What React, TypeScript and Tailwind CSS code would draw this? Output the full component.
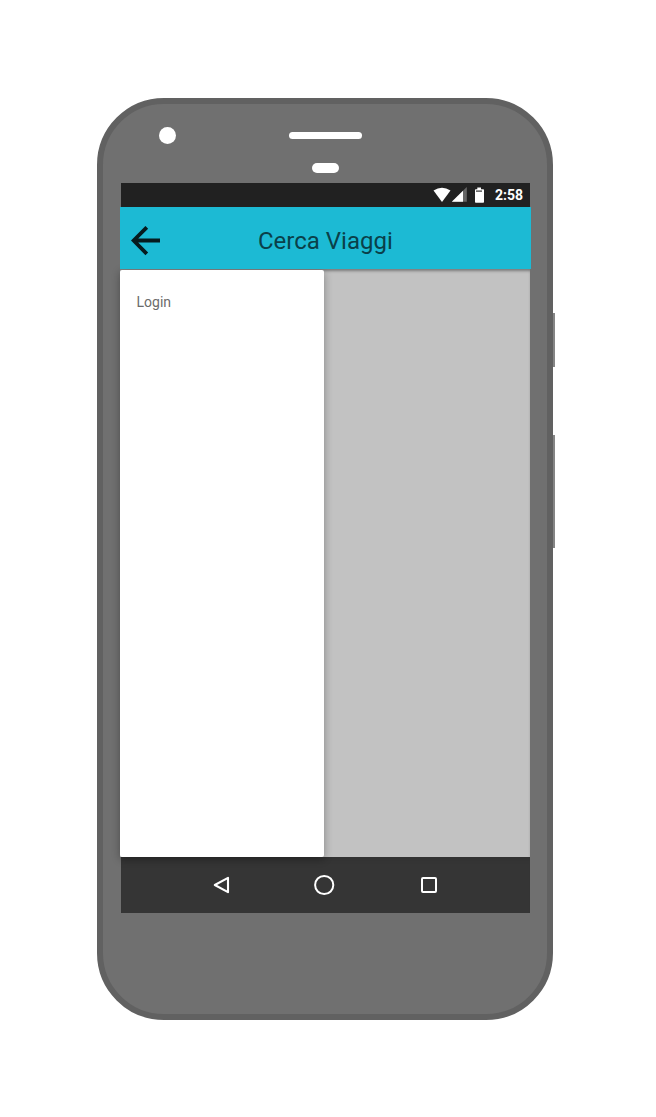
function StatusBar() {
  return (
    <div className="ml-px flex h-6 w-[409px] items-center bg-[#212121] pr-[7px]">
      <svg className="ml-auto h-6 w-[56px]" viewBox="0 0 56 24" fill="#fff">
        <path d="M2.5 7.6Q11 1.8 19.5 7.6L11 19Z" />
        <path d="M20.8 18.7L35.8 4V18.7Z" fill="#666" />
        <path d="M20.8 18.7L32 7.7V18.7Z" />
        <path d="M44 6.2h2.3V4.6h3.7v1.6h2.3q.7 0 .7.8V19q0 .8-.8.8h-7.4q-.8 0-.8-.8V7q0-.8.7-.8Z" />
        <path d="M45 7.5h6v1.2h-6Z" fill="#303030" />
      </svg>
      <span className="ml-[7.5px] text-[14px] leading-6 font-bold text-white">2:58</span>
    </div>
  );
}

function Header() {
  return (
    <header className="relative z-10 flex h-[62px] w-[411px] items-center bg-[#1cbad4] pt-[6px]">
      <svg className="ml-[11px] h-[30px] w-[30px]" viewBox="0 0 30 30" fill="none" stroke="#061b1e" strokeWidth="3.8">
        <path d="M29 14.5H3M15.8 1.3L2.6 14.5L15.8 27.8" />
      </svg>
      <h1 className="ml-[97px] text-[24px] leading-[30px] font-normal text-[#0a4049]">
        Cerca Viaggi
      </h1>
    </header>
  );
}

function Navigation() {
  return (
    <nav className="ml-px flex h-14 w-[409px] items-center bg-[#353535] shadow-[inset_0_6px_6px_-5px_rgba(0,0,0,0.1)]">
      <svg className="ml-[92px] h-5 w-[18px]" viewBox="0 0 18 20" fill="none" stroke="#fff" strokeWidth="2.1" strokeLinejoin="round">
        <path d="M15 2.8V17.2L1.8 10Z" />
      </svg>
      <svg className="ml-[82px] h-[22px] w-[22px]" viewBox="0 0 22 22" fill="none" stroke="#fff" strokeWidth="2">
        <circle cx="11.2" cy="11" r="9.1" />
      </svg>
      <span className="ml-[86px] h-4 w-4 rounded-[2px] border-2 border-white" />
    </nav>
  );
}

export default function App() {
  return (
    <div className="flex h-[1117px] w-[656px] items-start overflow-hidden bg-white pt-[98px] pl-[97px] font-[Roboto,sans-serif]">
      <div className="flex h-[922px] w-[456px] shrink-0 flex-col rounded-[67px] border-[6px] border-[#616161] bg-[#707070]">
        <div className="flex h-[79px] shrink-0 items-start pt-[23px] pl-[56px]">
          <div className="h-[17px] w-[17px] rounded-full bg-white" />
          <div className="ml-[113px] flex w-[73px] flex-col items-center pt-[5px]">
            <div className="h-[7px] w-[73px] rounded-full bg-white" />
            <div className="mt-[24px] h-[10px] w-[27px] rounded-full bg-white" />
          </div>
        </div>
        <div className="ml-[17px] flex w-[411px] flex-col">
          <StatusBar />
          <Header />
          <main className="flex h-[588px] w-[410px] bg-[#c2c2c2] pt-px shadow-[inset_0_3px_3px_-1px_rgba(0,0,0,0.38)]">
            <aside className="relative w-[204px] rounded-[2px] bg-white pt-[22px] pl-[16.5px] shadow-[0_2px_8px_rgba(0,0,0,0.32)]">
              <p className="text-[14px] leading-5 text-[#6b6b6b]">Login</p>
            </aside>
          </main>
          <Navigation />
        </div>
      </div>
      <div className="flex flex-col pt-[215px]">
        <div className="h-[54px] w-[2px] bg-[#858585]" />
        <div className="mt-[68px] h-[113px] w-[2px] bg-[#858585]" />
      </div>
    </div>
  );
}
